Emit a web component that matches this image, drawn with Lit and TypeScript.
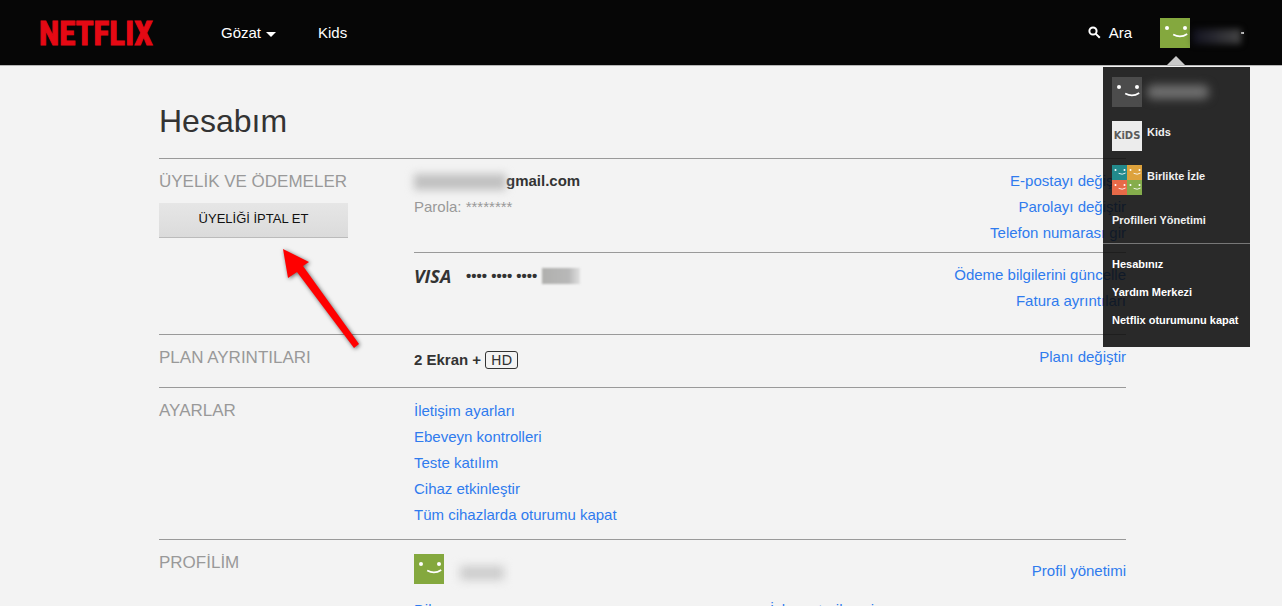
import { LitElement, html, css } from "lit";
import { customElement, property } from "lit/decorators.js";

@customElement("face-avatar")
class FaceAvatar extends LitElement {
  @property() color = "#84a83e";
  static styles = css`
    :host { display: block; flex: none; width: 30px; height: 30px; }
    svg { display: block; width: 100%; height: 100%; }
  `;
  render() {
    return html`<svg viewBox="0 0 30 30" aria-hidden="true">
      <rect width="30" height="30" fill=${this.color} />
      <circle cx="7" cy="10" r="2" fill="#fff" />
      <circle cx="25" cy="10" r="2" fill="#fff" />
      <path d="M13.2 16.6Q20.5 20.6 27.2 16" fill="none" stroke="#fff" stroke-width="1.7" />
    </svg>`;
  }
}

@customElement("profile-menu")
class ProfileMenu extends LitElement {
  static styles = css`
    :host { display: block; width: 147px; box-sizing: border-box; background: rgba(12, 12, 12, 0.88); font: bold 11px/14px "Liberation Sans", Arial, sans-serif; color: #f0f0f0; padding-bottom: 12px; }
    a { color: inherit; text-decoration: none; }
    .profiles { display: flex; flex-direction: column; gap: 14px; padding: 10px 9px 16px; border-bottom: 1px solid #777; }
    .profile { display: flex; gap: 5px; height: 30px; }
    .name { padding-top: 4px; }
    .hidden-name { width: 62px; height: 14px; margin-top: 8px; background: #707070; filter: blur(5px); border-radius: 6px; }
    .kids { display: flex; flex: none; align-items: center; justify-content: center; width: 30px; height: 30px; background: #ececec; color: #5a5a5a; font: bold 10px/12px "DejaVu Sans", sans-serif; }
    .group { display: grid; flex: none; grid-template-columns: 15px 15px; width: 30px; }
    .group face-avatar { width: 15px; height: 15px; }
    .manage { padding-top: 4px; }
    .links { display: flex; flex-direction: column; gap: 14px; padding: 13px 9px 8px; color: #fff; }
  `;
  render() {
    return html`
      <div class="profiles">
        <a class="profile" href="#" aria-label="Profil"><face-avatar color="#4c4c4c"></face-avatar><span class="hidden-name"></span></a>
        <a class="profile" href="#"><span class="kids" aria-hidden="true">KiDS</span><span class="name">Kids</span></a>
        <a class="profile" href="#">
          <span class="group">
            ${["#238a8c", "#dda23c", "#e76a48", "#85ad4c"].map((c) => html`<face-avatar color=${c}></face-avatar>`)}
          </span>
          <span class="name">Birlikte İzle</span>
        </a>
        <a class="manage" href="#">Profilleri Yönetimi</a>
      </div>
      <div class="links">
        <a href="#">Hesabınız</a>
        <a href="#">Yardım Merkezi</a>
        <a href="#">Netflix oturumunu kapat</a>
      </div>
    `;
  }
}

const links = (items: string[]) => items.map((t) => html`<a href="#">${t}</a>`);

@customElement("app-root")
class AppRoot extends LitElement {
  static styles = css`
    :host { display: block; position: relative; min-height: 100vh; background: #f3f3f3; font: 15px/26px "Liberation Sans", Arial, sans-serif; color: #333; }
    a { color: #2f7bee; text-decoration: none; }
    header { position: relative; display: flex; align-items: center; height: 65px; padding: 0 38px 0 39px; background: #060606; border-bottom: 1px solid #b5b5b5; }
    header a { color: #fff; }
    .logo { width: 118px; height: 44px; display: block; margin-bottom: 2px; }
    .logo text { font: bold 33px "Liberation Sans Narrow", "Roboto Condensed", sans-serif; fill: #e50914; stroke: #e50914; stroke-width: 1px; }
    nav { display: flex; gap: 42px; padding-left: 64px; flex: 1; }
    .browse { display: flex; align-items: center; gap: 5px; }
    .caret { border: 5px solid transparent; border-top-color: #fff; border-bottom: 0; margin-top: 4px; }
    .search { display: flex; align-items: center; gap: 8px; margin-right: 28px; }
    .account { display: flex; align-items: center; padding: 0; border: 0; background: none; }
    .account-name { width: 48px; height: 15px; margin: 8px 0 0 3px; background: linear-gradient(90deg, #12121f, #444); filter: blur(3px); }
    .account .tick { width: 3px; height: 2px; background: #ddd; }
    .pointer { position: absolute; right: 97px; bottom: 0; border: 9px solid transparent; border-bottom-color: #c9c9c9; border-top: 0; }
    profile-menu { position: absolute; right: 32px; top: 67px; }
    main { padding: 35px 156px 0 159px; }
    h1 { margin: 0 0 17px; font: 32px/40px "Liberation Sans", Arial, sans-serif; }
    section { display: grid; grid-template-columns: 255px 1fr; border-top: 1px solid #999; }
    h2 { margin: 0; font: 17px/26px "Liberation Sans", Arial, sans-serif; color: #999; }
    .side { padding-top: 10px; display: flex; flex-direction: column; align-items: flex-start; gap: 8px; }
    .cancel { width: 189px; height: 35px; padding: 0 0 2px; border: 0; border-bottom: 1px solid #bbb; background: linear-gradient(#e6e6e6, #dbdbdb); font: 13px/16px "Liberation Sans", Arial, sans-serif; color: #111; }
    .row { display: flex; justify-content: space-between; padding: 9px 0 6px; }
    .row.card { padding-bottom: 20px; border-top: 1px solid #999; }
    .row.plan { padding-bottom: 11px; }
    .actions { display: flex; flex-direction: column; align-items: flex-end; }
    .settings { display: flex; flex-direction: column; align-items: flex-start; padding: 10px 0 11px; }
    .email { display: flex; font-weight: bold; }
    .email .veil { width: 92px; height: 16px; margin-top: 6px; background: #c0c0c0; filter: blur(4px); }
    .muted { color: #999; }
    .visa { display: flex; align-items: center; height: 28px; }
    .brand { width: 52px; font: italic bold 18px/20px "Open Sans", sans-serif; }
    .dots { width: 76px; font-weight: bold; }
    .digits { width: 38px; height: 16px; background: linear-gradient(90deg, #b0b0ae, #b8b8b8 70%, #e0e0e0); filter: blur(1px); }
    .hd { box-sizing: border-box; width: 33px; border: 1px solid #333; border-radius: 3px; font: 14px/16px "DejaVu Sans", sans-serif; text-align: center; }
    .screens { display: flex; align-items: center; gap: 4px; height: 32px; font-weight: bold; }
    .person { display: flex; align-items: center; gap: 16px; }
    .person .veil { width: 44px; height: 14px; background: #ccc; filter: blur(5px); margin-top: 8px; }
    .profile-row { display: flex; justify-content: space-between; align-items: flex-end; padding: 14px 0 13px; }
    .prefs { display: grid; grid-template-columns: 1fr 1fr; }
    .arrow { position: absolute; left: 275px; top: 241px; width: 92px; height: 116px; pointer-events: none; filter: drop-shadow(1px 1px 2px rgba(0, 0, 0, 0.6)); }
  `;

  render() {
    return html`
      <header>
        <a href="#" aria-label="Netflix"><svg class="logo" viewBox="0 0 118 44"><text x="0" y="35">NETFLIX</text></svg></a>
        <nav>
          <a class="browse" href="#">Gözat <span class="caret"></span></a>
          <a href="#">Kids</a>
        </nav>
        <a class="search" href="#">
          <svg width="13" height="13" viewBox="0 0 13 13" aria-hidden="true" fill="none" stroke="#fff" stroke-width="2">
            <circle cx="5" cy="5" r="3.6" /><path d="M7.6 7.6L11.8 11.8" />
          </svg>
          Ara
        </a>
        <button class="account" aria-label="Profil menüsü">
          <face-avatar></face-avatar><span class="account-name"></span><span class="tick"></span>
        </button>
        <span class="pointer"></span>
      </header>
      <main>
        <h1>Hesabım</h1>
        <section>
          <div class="side">
            <h2>ÜYELİK VE ÖDEMELER</h2>
            <button class="cancel">ÜYELİĞİ İPTAL ET</button>
          </div>
          <div>
            <div class="row">
              <div>
                <div class="email"><span class="veil"></span>gmail.com</div>
                <div class="muted">Parola: ********</div>
              </div>
              <div class="actions">${links(["E-postayı değiştir", "Parolayı değiştir", "Telefon numarası gir"])}</div>
            </div>
            <div class="row card">
              <div class="visa"><span class="brand">VISA</span><span class="dots">•••• •••• ••••</span><span class="digits"></span></div>
              <div class="actions">${links(["Ödeme bilgilerini güncelle", "Fatura ayrıntıları"])}</div>
            </div>
          </div>
        </section>
        <section>
          <div class="side"><h2>PLAN AYRINTILARI</h2></div>
          <div class="row plan">
            <div class="screens">2 Ekran + <span class="hd">HD</span></div>
            <div class="actions">${links(["Planı değiştir"])}</div>
          </div>
        </section>
        <section>
          <div class="side"><h2>AYARLAR</h2></div>
          <div class="settings">
            ${links(["İletişim ayarları", "Ebeveyn kontrolleri", "Teste katılım", "Cihaz etkinleştir", "Tüm cihazlarda oturumu kapat"])}
          </div>
        </section>
        <section>
          <div class="side"><h2>PROFİLİM</h2></div>
          <div>
            <div class="profile-row">
              <div class="person"><face-avatar></face-avatar><span class="veil"></span></div>
              <a href="#">Profil yönetimi</a>
            </div>
            <div class="prefs">${links(["Dil", "İzleme tarihçesi"])}</div>
          </div>
        </section>
      </main>
      <svg class="arrow" viewBox="0 0 92 116" aria-hidden="true">
        <path d="M8 8L34 21L28 25L84 103L79 107L22 31L13 37Z" fill="#f00" />
      </svg>
      <profile-menu></profile-menu>
    `;
  }
}
